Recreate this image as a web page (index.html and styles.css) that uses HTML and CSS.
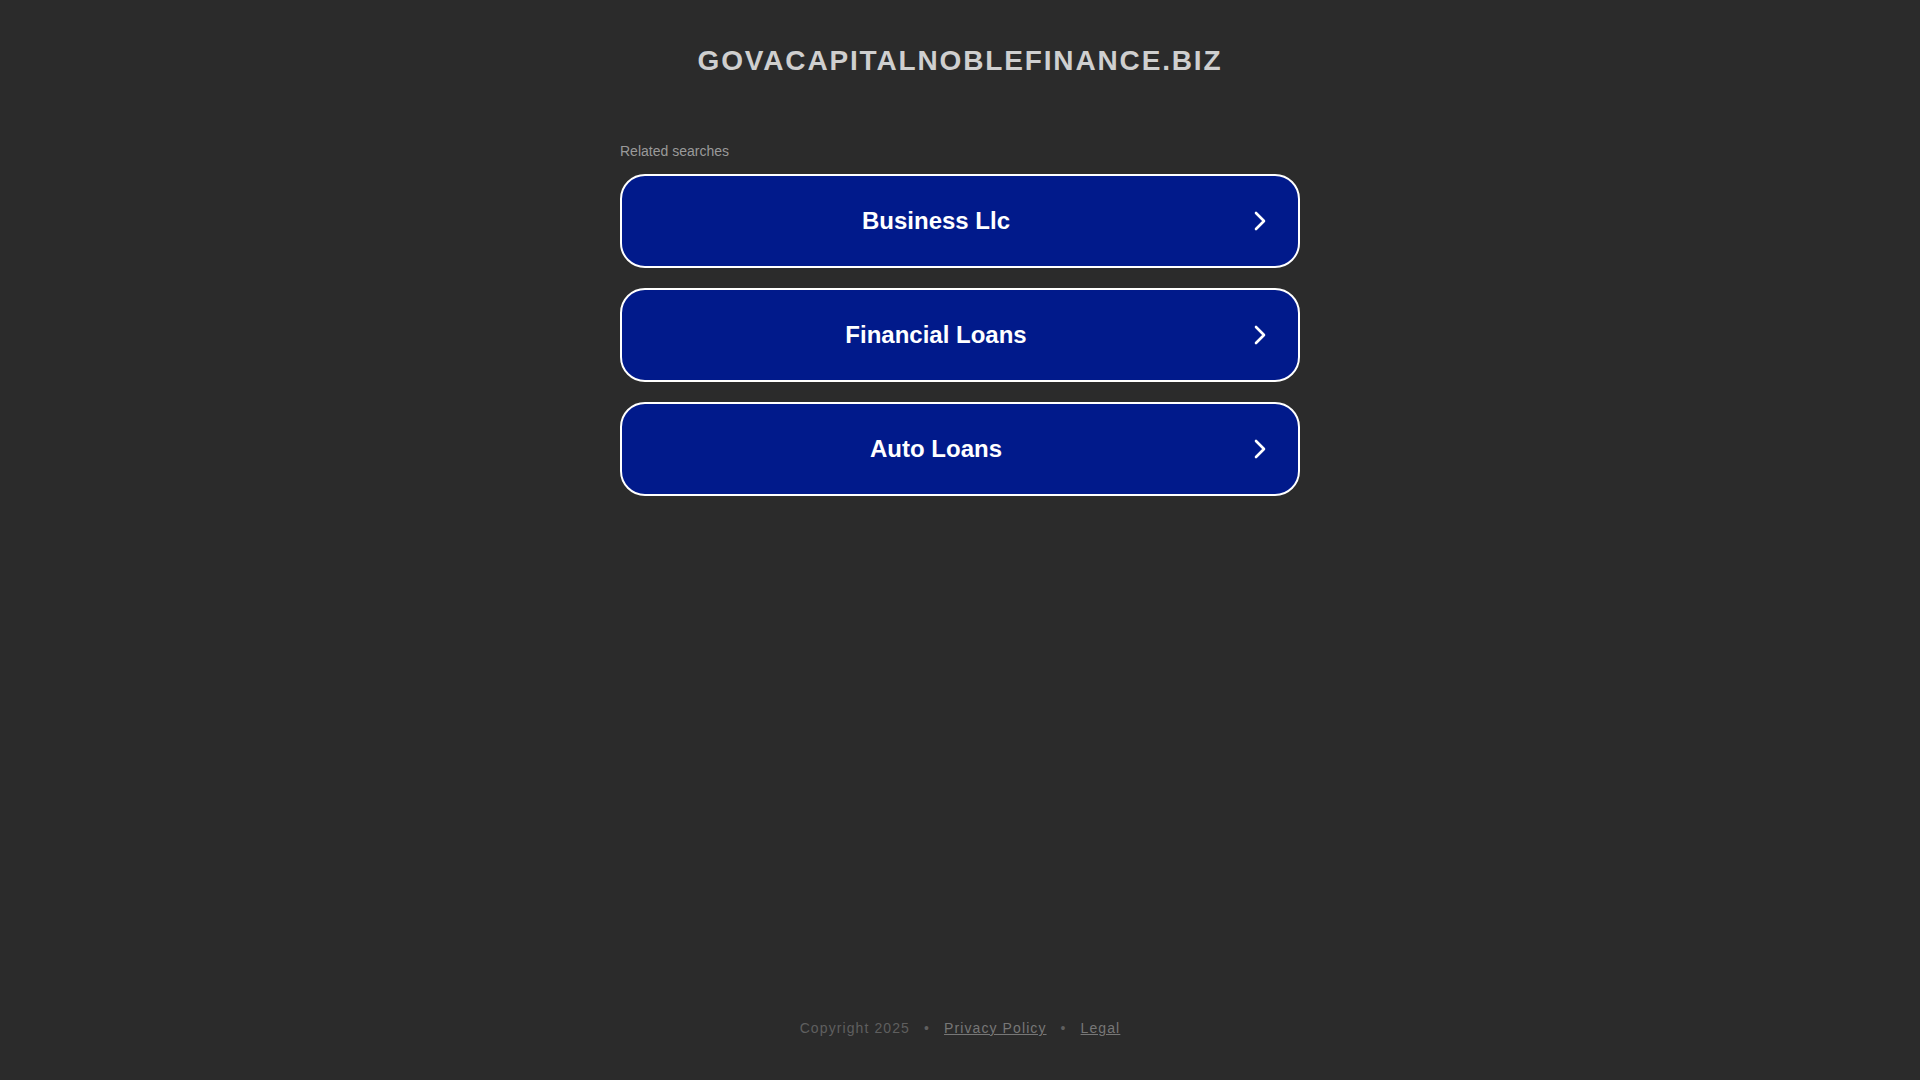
FILE: index.html
```html
<!DOCTYPE html>
<html lang="en">
<head>
<meta charset="utf-8">
<title>govacapitalnoblefinance.biz</title>
<link rel="stylesheet" href="styles.css">
</head>
<body>
<div class="page">
  <header class="header">
    <h1 class="domain">govacapitalnoblefinance.biz</h1>
  </header>
  <main class="main">
    <div class="related">
      <p class="related-title">Related searches</p>
      <a class="link" href="#"><span class="link-text">Business Llc</span><svg class="chev" viewBox="0 0 12 20" width="12" height="20"><path d="M2 2 L10 10 L2 18" fill="none" stroke="#fff" stroke-width="2.6" stroke-linecap="round" stroke-linejoin="round"/></svg></a>
      <a class="link" href="#"><span class="link-text">Financial Loans</span><svg class="chev" viewBox="0 0 12 20" width="12" height="20"><path d="M2 2 L10 10 L2 18" fill="none" stroke="#fff" stroke-width="2.6" stroke-linecap="round" stroke-linejoin="round"/></svg></a>
      <a class="link" href="#"><span class="link-text">Auto Loans</span><svg class="chev" viewBox="0 0 12 20" width="12" height="20"><path d="M2 2 L10 10 L2 18" fill="none" stroke="#fff" stroke-width="2.6" stroke-linecap="round" stroke-linejoin="round"/></svg></a>
    </div>
  </main>
  <footer class="footer">
    <span>Copyright 2025</span>
    <span class="dot">•</span>
    <a href="#" class="flink">Privacy Policy</a>
    <span class="dot">•</span>
    <a href="#" class="flink">Legal</a>
  </footer>
</div>
</body>
</html>
```
FILE: styles.css
```css
html, body {
  margin: 0;
  padding: 0;
  height: 100%;
}
body {
  background: #2b2b2b;
  font-family: "Liberation Sans", Arial, sans-serif;
}
.page {
  min-height: 1080px;
  display: flex;
  flex-direction: column;
}
.header {
  padding-top: 44px;
  text-align: center;
}
.domain {
  margin: 0;
  font-size: 28px;
  line-height: 34px;
  font-weight: bold;
  text-transform: uppercase;
  letter-spacing: 1.85px;
  color: #cfcfcf;
}
.main {
  flex: 1;
  display: flex;
  justify-content: center;
}
.related {
  width: 680px;
  padding-top: 65px;
  display: flex;
  flex-direction: column;
}
.related-title {
  margin: 0 0 15px 0;
  font-size: 14px;
  line-height: 16px;
  color: #9a9a9a;
}
.link {
  display: flex;
  align-items: center;
  height: 90px;
  margin-bottom: 20px;
  padding: 0 32px 0 0;
  gap: 4px;
  background: #011a8b;
  border: 2px solid #ffffff;
  border-radius: 25px;
  text-decoration: none;
  color: #ffffff;
}
.link-text {
  flex: 1;
  text-align: center;
  font-size: 24px;
  font-weight: bold;
  line-height: 28px;
}
.chev {
  flex: none;
  display: block;
}
.footer {
  height: 79px;
  display: flex;
  justify-content: center;
  align-items: flex-start;
  gap: 14px;
  padding-top: 18px;
  box-sizing: border-box;
  font-size: 14px;
  line-height: 18px;
  letter-spacing: 1.1px;
  color: #5f5f5f;
}
.dot {
  color: #5f5f5f;
}
.flink {
  color: #777777;
  text-decoration: underline;
}
```
